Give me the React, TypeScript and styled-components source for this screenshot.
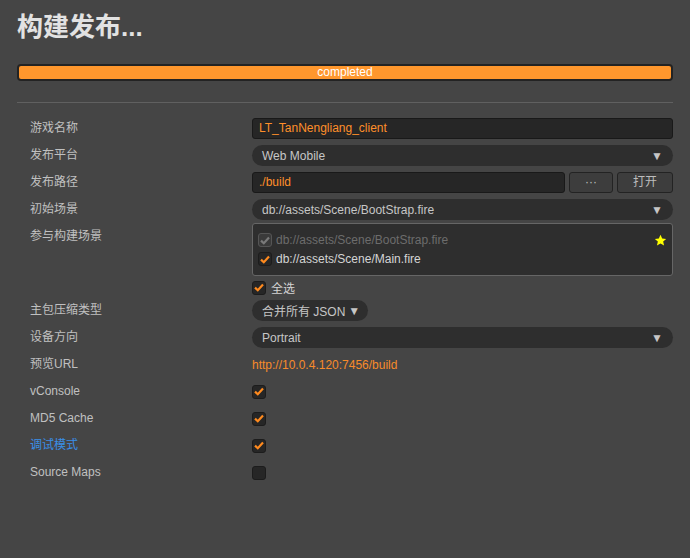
import React from 'react'
import styled, { createGlobalStyle } from 'styled-components'

const GlobalStyle = createGlobalStyle`
  html, body {
    margin: 0;
    padding: 0;
    background: #454545;
  }
  body {
    font-family: "Liberation Sans", Arial, "Noto Sans CJK SC", sans-serif;
    font-size: 12px;
    color: #c2c2c2;
  }
`

const Page = styled.div`
  width: 690px;
  height: 558px;
  box-sizing: border-box;
  padding: 10px 17px 0;
  background: #454545;
`

const Title = styled.h1`
  margin: 0;
  font-size: 26px;
  line-height: 34px;
  font-weight: bold;
  color: #e2e2e2;
`

const Progress = styled.div`
  margin-top: 20px;
  height: 17px;
  box-sizing: border-box;
  border: 2px solid #232323;
  border-radius: 4px;
  background: #232323;
  display: flex;
`

const ProgressFill = styled.div`
  flex: 1;
  background: #ff972d;
  border-radius: 2px;
  color: #fff;
  font-size: 12px;
  line-height: 13px;
  text-align: center;
`

const Divider = styled.hr`
  margin: 21px 0 12px;
  border: 0;
  border-top: 1px solid #606060;
`

const Form = styled.div`
  display: flex;
  flex-direction: column;
`

const Row = styled.div<{ $top?: boolean }>`
  display: flex;
  align-items: ${({ $top }) => ($top ? 'flex-start' : 'center')};
  min-height: 27px;
  padding-left: 13px;
`

const Label = styled.div<{ $accent?: boolean }>`
  width: 222px;
  flex-shrink: 0;
  font-size: 12px;
  line-height: 27px;
  color: ${({ $accent }) => ($accent ? '#3a8fe8' : '#c0c0c0')};
`

const Control = styled.div`
  flex: 1;
  display: flex;
  align-items: center;
  gap: 4px;
`

const TextInput = styled.div`
  flex: 1;
  height: 21px;
  box-sizing: border-box;
  border: 1px solid #191919;
  border-radius: 3px;
  background: #262626;
  color: #ff8f2a;
  font-size: 12px;
  line-height: 19px;
  padding: 0 6px;
`

const Select = styled.div<{ $inline?: boolean }>`
  ${({ $inline }) => ($inline ? '' : 'flex: 1;')}
  display: flex;
  align-items: center;
  justify-content: space-between;
  gap: 3px;
  height: 21px;
  box-sizing: border-box;
  border-radius: 11px;
  background: #2e2e2e;
  padding: 0 ${({ $inline }) => ($inline ? 8 : 10)}px 0 10px;
  font-size: 12px;
  color: #c6c6c6;
`

const Caret = styled.span`
  font-size: 12px;
  line-height: 12px;
  color: #c6c6c6;
`

const Button = styled.div<{ $w: number }>`
  width: ${({ $w }) => $w}px;
  height: 21px;
  box-sizing: border-box;
  border: 1px solid #232323;
  border-radius: 3px;
  background: #3d3d3d;
  color: #bcbcbc;
  font-size: 12px;
  line-height: 19px;
  text-align: center;
`

const SceneBlock = styled.div`
  flex: 1;
  display: flex;
  flex-direction: column;
  gap: 3px;
  padding: 0 0 1px;
`

const SceneBox = styled.div`
  height: 53px;
  box-sizing: border-box;
  border: 1px solid #666;
  border-radius: 3px;
  background: #2e2e2e;
  padding: 9px 5px 0;
  display: flex;
  flex-direction: column;
  gap: 5px;
`

const SceneItem = styled.div<{ $disabled?: boolean }>`
  display: flex;
  align-items: center;
  gap: 4px;
  height: 14px;
  color: ${({ $disabled }) => ($disabled ? '#6c6c6c' : '#d4d4d4')};
  font-size: 12px;
`

const Star = styled.span`
  margin-left: auto;
  display: flex;
`

const CheckRow = styled.div`
  display: flex;
  align-items: center;
  gap: 5px;
  color: #d4d4d4;
  font-size: 12px;
`

const Box = styled.span<{ $disabled?: boolean }>`
  width: 14px;
  height: 14px;
  box-sizing: border-box;
  border: 1px solid ${({ $disabled }) => ($disabled ? '#555' : '#1c1c1c')};
  border-radius: 3px;
  background: ${({ $disabled }) => ($disabled ? '#3a3a3a' : '#262626')};
  display: flex;
  align-items: center;
  justify-content: center;
`

const Link = styled.span`
  color: #f78b2a;
  font-size: 12px;
`

function Check({ checked = true, disabled }: { checked?: boolean; disabled?: boolean }) {
  return (
    <Box $disabled={disabled}>
      {checked && (
        <svg width="10" height="9" viewBox="0 0 10 9">
          <path
            d="M1 4.6 L3.8 7.2 L9 1.6"
            fill="none"
            stroke={disabled ? '#7a7a7a' : '#ff8a1e'}
            strokeWidth="2.2"
          />
        </svg>
      )}
    </Box>
  )
}

export default function App() {
  return (
    <>
      <GlobalStyle />
      <Page>
        <Title>构建发布...</Title>
        <Progress>
          <ProgressFill>completed</ProgressFill>
        </Progress>
        <Divider />
        <Form>
          <Row>
            <Label>游戏名称</Label>
            <Control>
              <TextInput>LT_TanNengliang_client</TextInput>
            </Control>
          </Row>
          <Row>
            <Label>发布平台</Label>
            <Control>
              <Select>
                Web Mobile<Caret>▼</Caret>
              </Select>
            </Control>
          </Row>
          <Row>
            <Label>发布路径</Label>
            <Control>
              <TextInput>./build</TextInput>
              <Button $w={44}>···</Button>
              <Button $w={56}>打开</Button>
            </Control>
          </Row>
          <Row>
            <Label>初始场景</Label>
            <Control>
              <Select>
                db://assets/Scene/BootStrap.fire<Caret>▼</Caret>
              </Select>
            </Control>
          </Row>
          <Row $top>
            <Label>参与构建场景</Label>
            <SceneBlock>
              <SceneBox>
                <SceneItem $disabled>
                  <Check disabled />
                  db://assets/Scene/BootStrap.fire
                  <Star>
                    <svg width="13" height="13" viewBox="0 0 24 24">
                      <path
                        d="M12 1.5l3.1 7 7.4.6-5.6 4.9 1.7 7.4L12 17.5l-6.6 3.9 1.7-7.4L1.5 9.1l7.4-.6z"
                        fill="#ffff00"
                      />
                    </svg>
                  </Star>
                </SceneItem>
                <SceneItem>
                  <Check />
                  db://assets/Scene/Main.fire
                </SceneItem>
              </SceneBox>
              <CheckRow>
                <Check />
                全选
              </CheckRow>
            </SceneBlock>
          </Row>
          <Row>
            <Label>主包压缩类型</Label>
            <Control>
              <Select $inline>
                合并所有 JSON<Caret>▼</Caret>
              </Select>
            </Control>
          </Row>
          <Row>
            <Label>设备方向</Label>
            <Control>
              <Select>
                Portrait<Caret>▼</Caret>
              </Select>
            </Control>
          </Row>
          <Row>
            <Label>预览URL</Label>
            <Control>
              <Link>http://10.0.4.120:7456/build</Link>
            </Control>
          </Row>
          <Row>
            <Label>vConsole</Label>
            <Control>
              <Check />
            </Control>
          </Row>
          <Row>
            <Label>MD5 Cache</Label>
            <Control>
              <Check />
            </Control>
          </Row>
          <Row>
            <Label $accent>调试模式</Label>
            <Control>
              <Check />
            </Control>
          </Row>
          <Row>
            <Label>Source Maps</Label>
            <Control>
              <Check checked={false} />
            </Control>
          </Row>
        </Form>
      </Page>
    </>
  )
}
